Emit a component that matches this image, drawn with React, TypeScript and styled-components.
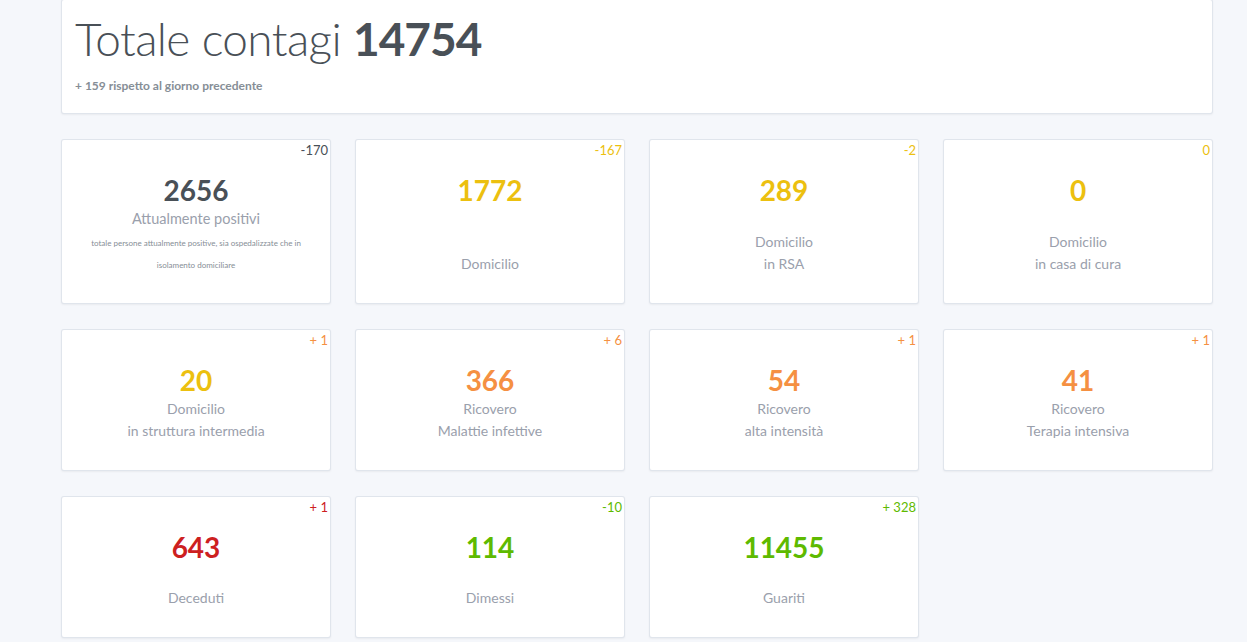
import React from 'react';
import styled, { createGlobalStyle } from 'styled-components';

const GlobalStyle = createGlobalStyle`
  html, body {
    margin: 0;
    padding: 0;
    background: #f5f7fb;
    font-family: Lato, "Open Sans", sans-serif;
    color: #495057;
  }
`;

const colors = {
  dark: '#495057',
  yellow: '#ecc00f',
  orange: '#f59042',
  red: '#cd201f',
  green: '#5eba00',
};

type Tone = keyof typeof colors;

const Page = styled.div`
  width: 1152px;
  padding: 0 0 24px 61px;
  display: flex;
  flex-direction: column;
  gap: 25px;
`;

const Card = styled.div`
  position: relative;
  background: #fff;
  border: 1px solid rgba(0, 40, 100, 0.12);
  border-radius: 3px;
  box-shadow: 0 1px 2px rgba(0, 0, 0, 0.05);
  box-sizing: border-box;
`;

const HeaderCard = styled(Card)`
  margin-top: -1px;
  height: 115px;
  padding: 11px 13px 0;
`;

const Title = styled.h1`
  margin: 0;
  font-size: 46px;
  line-height: 56px;
  font-weight: 300;
  letter-spacing: -0.6px;
  color: #495057;

  strong {
    font-weight: 700;
    letter-spacing: -1px;
  }
`;

const Subtitle = styled.div`
  margin-top: 11px;
  font-size: 12px;
  line-height: 15px;
  font-weight: 700;
  color: #868e96;
`;

const Grid = styled.div`
  display: grid;
  grid-template-columns: repeat(4, 270px);
  column-gap: 24px;
  row-gap: 25px;
`;

const StatCard = styled(Card)`
  display: flex;
  flex-direction: column;
  align-items: center;
  text-align: center;
  padding: 1px 2px 28px;
`;

const Delta = styled.div<{ $tone: Tone }>`
  align-self: flex-end;
  font-size: 13px;
  line-height: 18px;
  height: 18px;
  font-weight: 400;
  color: ${p => colors[p.$tone]};
`;

const Value = styled.div<{ $tone: Tone }>`
  margin-top: 14px;
  font-size: 28px;
  line-height: 35px;
  font-weight: 700;
  color: ${p => colors[p.$tone]};
`;

const Label = styled.div<{ $bottom?: boolean }>`
  margin-top: ${p => (p.$bottom ? 'auto' : '0')};
  min-height: 44px;
  display: flex;
  flex-direction: column;
  justify-content: flex-end;
  font-size: 14px;
  line-height: 22px;
  color: #9aa0ac;
`;

const Note = styled.div`
  margin-top: 2px;
  margin-bottom: -1px;
  font-size: 8px;
  line-height: 22px;
  color: #868e96;
`;

const MainLabel = styled.div`
  font-size: 14.5px;
  line-height: 22px;
  color: #9aa0ac;
`;

type Stat = {
  value: string;
  delta: string;
  tone: Tone;
  lines: string[];
};

const stats: Stat[] = [
  { value: '1772', delta: '-167', tone: 'yellow', lines: ['Domicilio'] },
  { value: '289', delta: '-2', tone: 'yellow', lines: ['Domicilio', 'in RSA'] },
  { value: '0', delta: '0', tone: 'yellow', lines: ['Domicilio', 'in casa di cura'] },
  { value: '20', delta: '+ 1', tone: 'orange', lines: ['Domicilio', 'in struttura intermedia'] },
  { value: '366', delta: '+ 6', tone: 'orange', lines: ['Ricovero', 'Malattie infettive'] },
  { value: '54', delta: '+ 1', tone: 'orange', lines: ['Ricovero', 'alta intensità'] },
  { value: '41', delta: '+ 1', tone: 'orange', lines: ['Ricovero', 'Terapia intensiva'] },
  { value: '643', delta: '+ 1', tone: 'red', lines: ['Deceduti'] },
  { value: '114', delta: '-10', tone: 'green', lines: ['Dimessi'] },
  { value: '11455', delta: '+ 328', tone: 'green', lines: ['Guariti'] },
];

export default function App() {
  return (
    <>
      <GlobalStyle />
      <Page>
        <HeaderCard>
          <Title>
            Totale contagi <strong>14754</strong>
          </Title>
          <Subtitle>+ 159 rispetto al giorno precedente</Subtitle>
        </HeaderCard>
        <Grid>
          <StatCard>
            <Delta $tone="dark">-170</Delta>
            <Value $tone="dark">2656</Value>
            <MainLabel>Attualmente positivi</MainLabel>
            <Note>
              totale persone attualmente positive, sia ospedalizzate che in
              <br />
              isolamento domiciliare
            </Note>
          </StatCard>
          {stats.map((s, i) => (
            <StatCard key={i}>
              <Delta $tone={s.tone}>{s.delta}</Delta>
              <Value $tone={i === 3 ? 'yellow' : s.tone}>{s.value}</Value>
              <Label $bottom>
                {s.lines.map(l => (
                  <div key={l}>{l}</div>
                ))}
              </Label>
            </StatCard>
          ))}
        </Grid>
      </Page>
    </>
  );
}
